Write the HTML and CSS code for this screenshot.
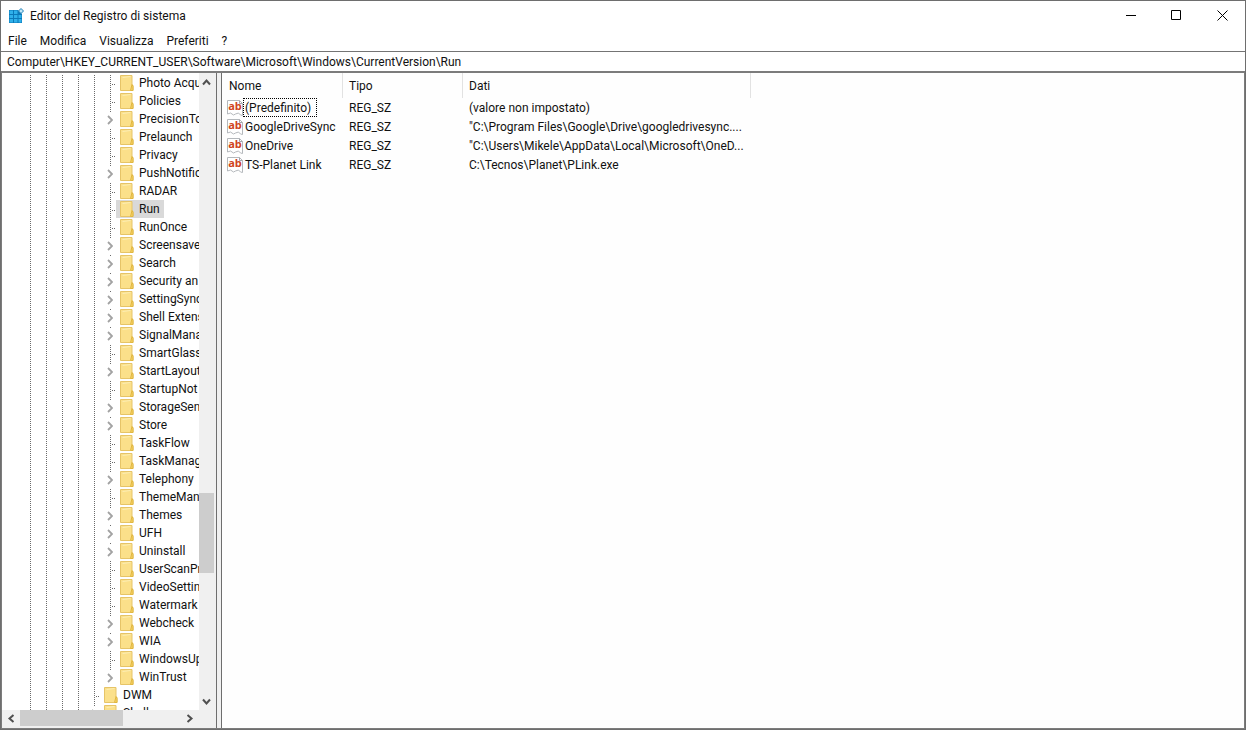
FILE: index.html
```html
<!DOCTYPE html>
<html lang="it">
<head>
<meta charset="utf-8">
<title>Editor del Registro di sistema</title>
<link rel="stylesheet" href="styles.css">
</head>
<body>
<svg class="defs" aria-hidden="true">
  <symbol id="folder" viewBox="0 0 14 16">
    <path d="M1 .5h11v9l1 1v5H.5V.5z" fill="#fbe08a" stroke="#e6c468"/>
    <path d="M2.500 2.500l8-1" stroke="#fdeeb4" fill="none"/>
    <path d="M10.500 15.500l1.500-6 1 2v4z" fill="#f6d264" stroke="#e0b640"/>
  </symbol>
  <symbol id="paper" viewBox="0 0 16 16">
    <path d="M.5 14V.5h12l3 3v12l-2-.5-2-2-3 1-2 1-3-2z" fill="#fff" stroke="#b4b8bc"/>
    <path d="M12.500.5v3h3" fill="none" stroke="#a4a8ac"/>
  </symbol>
  <symbol id="expand" viewBox="0 0 6 10"><path d="M1 1l4 4-4 4" fill="none" stroke="#a2a2a2" stroke-width="1.800"/></symbol>
  <symbol id="arrow" viewBox="0 0 9 9"><path d="M1 6.500l3.500-4L8 6.500" fill="none" stroke="#505050" stroke-width="2"/></symbol>
</svg>
<div class="window">
  <header class="titlebar">
    <svg class="app-icon" viewBox="0 0 16 16" aria-hidden="true">
      <path d="M1 2h9l4 4v9H1z" fill="#0b78b8"/>
      <path d="M1.500 2.500H5V6H1.500zM6 2.500h3.500V6H6zM1.500 7H5v3H1.500zM6 7h3.500v3H6zM10.500 7h3v3h-3zM1.500 11H5v3.500H1.500zM6 11h3.500v3.500H6zM10.500 11h3v3.500h-3z" fill="#2fb0ea"/>
      <path d="M13 .5L15.500 3 13 5.500 10.500 3z" fill="#bfe6f8" stroke="#1c7fb6"/>
    </svg>
    <h1 class="title">Editor del Registro di sistema</h1>
    <div class="caption-buttons">
      <button class="caption" aria-label="Riduci a icona"><svg viewBox="0 0 11 11"><path d="M1 5.500h10" stroke="#000"/></svg></button>
      <button class="caption" aria-label="Ingrandisci"><svg viewBox="0 0 11 11"><path d="M.5.5h9v9h-9z" fill="none" stroke="#000"/></svg></button>
      <button class="caption" aria-label="Chiudi"><svg viewBox="0 0 11 11"><path d="M.5.5l10 10M10.500.5l-10 10" stroke="#000"/></svg></button>
    </div>
  </header>
  <nav class="menubar">
    <button class="menu">File</button>
    <button class="menu">Modifica</button>
    <button class="menu">Visualizza</button>
    <button class="menu">Preferiti</button>
    <button class="menu">?</button>
  </nav>
  <input class="address" type="text" aria-label="Percorso" value="Computer\HKEY_CURRENT_USER\Software\Microsoft\Windows\CurrentVersion\Run">
  <main class="panes">
    <aside class="tree-pane">
      <ul class="tree">
        <li class="key"><i class="joint"></i><svg class="folder"><use href="#folder"/></svg><span class="name">Photo Acqui</span></li>
        <li class="key"><i class="joint"></i><svg class="folder"><use href="#folder"/></svg><span class="name">Policies</span></li>
        <li class="key"><button class="expander" aria-label="Espandi"><svg><use href="#expand"/></svg></button><svg class="folder"><use href="#folder"/></svg><span class="name">PrecisionTo</span></li>
        <li class="key"><i class="joint"></i><svg class="folder"><use href="#folder"/></svg><span class="name">Prelaunch</span></li>
        <li class="key"><i class="joint"></i><svg class="folder"><use href="#folder"/></svg><span class="name">Privacy</span></li>
        <li class="key"><button class="expander" aria-label="Espandi"><svg><use href="#expand"/></svg></button><svg class="folder"><use href="#folder"/></svg><span class="name">PushNotific</span></li>
        <li class="key"><i class="joint"></i><svg class="folder"><use href="#folder"/></svg><span class="name">RADAR</span></li>
        <li class="key selected"><i class="joint"></i><svg class="folder"><use href="#folder"/></svg><span class="name">Run</span></li>
        <li class="key"><i class="joint"></i><svg class="folder"><use href="#folder"/></svg><span class="name">RunOnce</span></li>
        <li class="key"><button class="expander" aria-label="Espandi"><svg><use href="#expand"/></svg></button><svg class="folder"><use href="#folder"/></svg><span class="name">Screensave</span></li>
        <li class="key"><button class="expander" aria-label="Espandi"><svg><use href="#expand"/></svg></button><svg class="folder"><use href="#folder"/></svg><span class="name">Search</span></li>
        <li class="key"><button class="expander" aria-label="Espandi"><svg><use href="#expand"/></svg></button><svg class="folder"><use href="#folder"/></svg><span class="name">Security an</span></li>
        <li class="key"><button class="expander" aria-label="Espandi"><svg><use href="#expand"/></svg></button><svg class="folder"><use href="#folder"/></svg><span class="name">SettingSync</span></li>
        <li class="key"><button class="expander" aria-label="Espandi"><svg><use href="#expand"/></svg></button><svg class="folder"><use href="#folder"/></svg><span class="name">Shell Extens</span></li>
        <li class="key"><button class="expander" aria-label="Espandi"><svg><use href="#expand"/></svg></button><svg class="folder"><use href="#folder"/></svg><span class="name">SignalMana</span></li>
        <li class="key"><i class="joint"></i><svg class="folder"><use href="#folder"/></svg><span class="name">SmartGlass</span></li>
        <li class="key"><button class="expander" aria-label="Espandi"><svg><use href="#expand"/></svg></button><svg class="folder"><use href="#folder"/></svg><span class="name">StartLayout</span></li>
        <li class="key"><i class="joint"></i><svg class="folder"><use href="#folder"/></svg><span class="name">StartupNot</span></li>
        <li class="key"><button class="expander" aria-label="Espandi"><svg><use href="#expand"/></svg></button><svg class="folder"><use href="#folder"/></svg><span class="name">StorageSen</span></li>
        <li class="key"><button class="expander" aria-label="Espandi"><svg><use href="#expand"/></svg></button><svg class="folder"><use href="#folder"/></svg><span class="name">Store</span></li>
        <li class="key"><i class="joint"></i><svg class="folder"><use href="#folder"/></svg><span class="name">TaskFlow</span></li>
        <li class="key"><i class="joint"></i><svg class="folder"><use href="#folder"/></svg><span class="name">TaskManag</span></li>
        <li class="key"><button class="expander" aria-label="Espandi"><svg><use href="#expand"/></svg></button><svg class="folder"><use href="#folder"/></svg><span class="name">Telephony</span></li>
        <li class="key"><i class="joint"></i><svg class="folder"><use href="#folder"/></svg><span class="name">ThemeMan</span></li>
        <li class="key"><button class="expander" aria-label="Espandi"><svg><use href="#expand"/></svg></button><svg class="folder"><use href="#folder"/></svg><span class="name">Themes</span></li>
        <li class="key"><button class="expander" aria-label="Espandi"><svg><use href="#expand"/></svg></button><svg class="folder"><use href="#folder"/></svg><span class="name">UFH</span></li>
        <li class="key"><button class="expander" aria-label="Espandi"><svg><use href="#expand"/></svg></button><svg class="folder"><use href="#folder"/></svg><span class="name">Uninstall</span></li>
        <li class="key"><i class="joint"></i><svg class="folder"><use href="#folder"/></svg><span class="name">UserScanPr</span></li>
        <li class="key"><i class="joint"></i><svg class="folder"><use href="#folder"/></svg><span class="name">VideoSettin</span></li>
        <li class="key"><i class="joint"></i><svg class="folder"><use href="#folder"/></svg><span class="name">Watermark</span></li>
        <li class="key"><button class="expander" aria-label="Espandi"><svg><use href="#expand"/></svg></button><svg class="folder"><use href="#folder"/></svg><span class="name">Webcheck</span></li>
        <li class="key"><button class="expander" aria-label="Espandi"><svg><use href="#expand"/></svg></button><svg class="folder"><use href="#folder"/></svg><span class="name">WIA</span></li>
        <li class="key"><i class="joint"></i><svg class="folder"><use href="#folder"/></svg><span class="name">WindowsUp</span></li>
        <li class="key"><button class="expander" aria-label="Espandi"><svg><use href="#expand"/></svg></button><svg class="folder"><use href="#folder"/></svg><span class="name">WinTrust</span></li>
        <li class="key parent"><i class="joint"></i><svg class="folder"><use href="#folder"/></svg><span class="name">DWM</span></li>
        <li class="key parent"><button class="expander" aria-label="Espandi"><svg><use href="#expand"/></svg></button><svg class="folder"><use href="#folder"/></svg><span class="name">Shell</span></li>
      </ul>
      <div class="scrollbar vertical">
        <button class="step" aria-label="Scorri su"><svg class="up"><use href="#arrow"/></svg></button>
        <span style="flex-grow:402"></span><span class="thumb" style="flex-grow:80"></span><span style="flex-grow:119"></span>
        <button class="step" aria-label="Scorri giù"><svg class="down"><use href="#arrow"/></svg></button>
      </div>
      <div class="scrollbar horizontal">
        <button class="step" aria-label="Scorri a sinistra"><svg class="left"><use href="#arrow"/></svg></button>
        <span class="thumb" style="flex-grow:103"></span><span style="flex-grow:57"></span>
        <button class="step" aria-label="Scorri a destra"><svg class="right"><use href="#arrow"/></svg></button>
      </div>
    </aside>
    <section class="list-pane">
      <table class="values">
        <colgroup><col class="col-name"><col class="col-type"><col class="col-data"></colgroup>
        <thead><tr><th>Nome</th><th>Tipo</th><th>Dati</th></tr></thead>
        <tbody>
          <tr><td><div class="value"><span class="kind"><svg><use href="#paper"/></svg><b>ab</b></span><span class="label focused">(Predefinito)</span></div></td><td>REG_SZ</td><td>(valore non impostato)</td></tr>
          <tr><td><div class="value"><span class="kind"><svg><use href="#paper"/></svg><b>ab</b></span><span class="label">GoogleDriveSync</span></div></td><td>REG_SZ</td><td>"C:\Program Files\Google\Drive\googledrivesync....</td></tr>
          <tr><td><div class="value"><span class="kind"><svg><use href="#paper"/></svg><b>ab</b></span><span class="label">OneDrive</span></div></td><td>REG_SZ</td><td>"C:\Users\Mikele\AppData\Local\Microsoft\OneD...</td></tr>
          <tr><td><div class="value"><span class="kind"><svg><use href="#paper"/></svg><b>ab</b></span><span class="label">TS-Planet Link</span></div></td><td>REG_SZ</td><td>C:\Tecnos\Planet\PLink.exe</td></tr>
        </tbody>
      </table>
    </section>
  </main>
</div>
</body>
</html>
```
FILE: styles.css
```css
* { box-sizing: border-box; }
body { margin: 0; background: #fff; color: #111; font: 12px/18px Roboto, "Noto Sans", sans-serif; }
button, input { font: inherit; color: inherit; background: none; border: 0; margin: 0; padding: 0; }
.defs { position: absolute; width: 0; height: 0; }

.window { display: flex; flex-direction: column; height: 100vh; border: 1px solid #6e6e6e; }

.titlebar { display: flex; align-items: center; height: 29px; padding-left: 7px; }
.app-icon { width: 16px; height: 16px; }
.title { margin: 0 0 0 6px; font-size: 12px; font-weight: normal; }
.caption-buttons { display: flex; margin-left: auto; height: 100%; }
.caption { display: grid; place-items: center; width: 46px; }
.caption svg { width: 11px; height: 11px; }

.menubar { display: flex; gap: 13px; height: 21px; padding-left: 7px; }

.address { height: 22px; padding: 0 6px; border-top: 1px solid #747474; border-bottom: 2px solid #7c7c7c; outline: 0; }

.panes { display: flex; flex: 1; min-height: 0; border-right: 1px solid #7c7c7c; border-bottom: 1px solid #7c7c7c; background: #f0f0f0; }
.tree-pane { display: grid; grid-template: minmax(0, 1fr) 18px / minmax(0, 1fr) 16px; flex: 0 0 216px; padding-right: 1px; border-left: 1px solid #7c7c7c; border-right: 1px solid #6e6e6e; }
.tree { overflow: hidden; margin: 0; padding: 1px 0 0 20px; list-style: none; background: #fff; }
.key { display: flex; height: 18px; padding-left: 80px; white-space: nowrap;
  background-image: linear-gradient(#fff 1px, transparent 1px),
    linear-gradient(90deg, transparent 8px, #6a6a6a 8px, #6a6a6a 9px, transparent 9px);
  background-size: 80px 2px, 16px 100%; background-repeat: repeat-y, repeat-x; }
.key.parent { padding-left: 64px; }
.joint, .expander { flex: none; width: 14px; height: 18px; }
.joint { background:
    repeating-linear-gradient(#fff 0 1px, #6a6a6a 1px 2px) 8px 0 / 1px 18px no-repeat,
    repeating-linear-gradient(90deg, #fff 0 1px, #6a6a6a 1px 2px) 9px 10px / 5px 1px no-repeat, #fff; }
.expander { display: grid; place-items: center; padding: 2px 0 0 1px; background: linear-gradient(#6a6a6a, #6a6a6a) 8px 1px / 1px 1px no-repeat, #fff; }
.expander svg { width: 6px; height: 10px; }
.folder { flex: none; width: 20px; height: 18px; padding: 1px 2px 1px 4px; background: #fff; }
.name { flex: 1 0 auto; padding: 0 4px 0 3px; background: #fff; }
.selected .folder, .selected .name { background: #d9d9d9; }
.selected .name { flex: none; }
.selected::after { content: ""; flex: 1; background: #fff; }

.scrollbar { display: flex; background: #f0f0f0; }
.scrollbar span { flex-basis: 0; }
.vertical { flex-direction: column; padding-right: 1px; }
.horizontal { grid-column: 1 / -1; padding: 0 17px 2px 0; }
.thumb { background: #cdcdcd; }
.step { display: grid; place-items: center; flex: none; width: 18px; height: 17px; }
.vertical .step { width: 15px; height: 18px; }
.step svg { width: 9px; height: 9px; }
.down { transform: rotate(180deg); }
.left { transform: rotate(-90deg); }
.right { transform: rotate(90deg); }

.list-pane { flex: 1; min-width: 0; margin-left: 4px; border-left: 1px solid #6e6e6e; background: #fefefe; overflow: hidden; }
.values { table-layout: fixed; width: 529px; border-collapse: separate; border-spacing: 0; }
.col-name { width: 121px; }
.col-type { width: 120px; }
.col-data { width: 288px; }
th { height: 25px; padding: 0 0 0 6px; border-right: 1px solid #e2e2e2; font-weight: normal; text-align: left; }
th:first-child { padding-left: 7px; }
td { height: 19px; padding: 0 0 0 6px; white-space: nowrap; }
td:first-child { padding-left: 5px; }
.value { display: flex; align-items: center; height: 19px; }
.kind { display: grid; flex: none; width: 16px; height: 16px; }
.kind svg, .kind b { grid-area: 1 / 1; width: 16px; height: 16px; }
.kind b { color: #d0441c; font: bold 11px/11px "Open Sans", sans-serif; text-align: center; }
.label { height: 19px; padding: 0 5px 0 1px; border: 1px solid transparent; line-height: 18px; }
.focused { border: 1px dotted #000; }
```
